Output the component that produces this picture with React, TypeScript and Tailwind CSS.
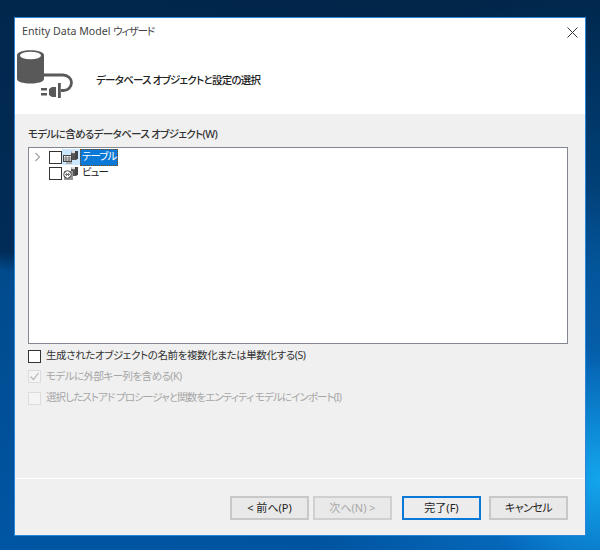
const font = "font-['Noto_Sans','Noto_Sans_CJK_JP',sans-serif] [font-feature-settings:'palt']";

function TreeIcon({ kind }: { kind: "table" | "view" }) {
  return (
    <svg width="17" height="15" viewBox="0 0 17 15" className="shrink-0">
      <rect x="9" y="1" width="6" height="9" rx="1" fill="#555" />
      <ellipse cx="12" cy="2" rx="3" ry="1.2" fill="#ddd" />
      <rect x="13" y="1" width="3" height="8" fill="#444" />
      {kind === "table" ? (
        <g>
          <rect x="1.500" y="5.500" width="8" height="6" fill="#fff" stroke="#444" />
          <path d="M1.500 8h8M1.500 10h8M4 5.500v6M7 5.500v6" stroke="#555" strokeWidth="0.8" />
          <rect x="4" y="12" width="6" height="2" fill="#aaa" />
        </g>
      ) : (
        <g>
          <rect x="2" y="5" width="9" height="9" fill="#999" />
          <circle cx="5.500" cy="8.500" r="3.800" fill="#fff" stroke="#444" />
          <path d="M3.500 6.500l4 4M7.500 6.500l-4 4M3 8.500h5" stroke="#555" strokeWidth="0.8" />
        </g>
      )}
    </svg>
  );
}

function Check({ checked, disabled }: { checked?: boolean; disabled?: boolean }) {
  return (
    <span
      className={`flex h-[13px] w-[13px] shrink-0 items-center justify-center border ${
        disabled ? "border-[#dcdcdc] bg-[#f4f4f4]" : "border-[#333] bg-white"
      }`}
    >
      {checked && (
        <svg width="11" height="11" viewBox="0 0 11 11">
          <path d="M1.500 5.500l3 3 5-6.500" fill="none" stroke="#b5b5b5" strokeWidth="1.200" />
        </svg>
      )}
    </span>
  );
}

function Btn({ children, disabled, primary, tight }: { children: string; disabled?: boolean; primary?: boolean; tight?: boolean }) {
  return (
    <div
      className={`flex h-[24px] w-[79px] items-center justify-center text-[11px] ${tight ? "tracking-[-0.5px]" : ""} ${
        primary
          ? "border-2 border-[#0a78d7] bg-[#ececec] text-[#222]"
          : disabled
            ? "border-2 border-[#d0d0d0] bg-[#e9e9e9] text-[#a8a8a8]"
            : "border-2 border-[#c8c8c8] bg-[#e9e9e9] text-[#222]"
      }`}
    >
      {children}
    </div>
  );
}

export default function App() {
  return (
    <div className={`h-[550px] w-[600px] overflow-hidden bg-[radial-gradient(circle_at_100%_87%,rgba(20,170,240,0.95)_0%,rgba(10,120,210,0.55)_15%,transparent_38%),radial-gradient(circle_at_100%_50%,rgba(1,85,155,0.75)_0%,transparent_45%),linear-gradient(189.5deg,#012548_0%,#012c58_54%,#014a8c_57%,#0056a4_100%)] pl-[14px] pt-[17px] ${font}`}>
      <div className="flex h-[519px] w-[572px] flex-col border border-[#2b86d8] bg-[#f0f0f0]">
        <div className="h-[96px] shrink-0 bg-white">
          <div className="flex h-[28px] items-center justify-between pl-[7px] pr-[7px]">
            <span className="text-[10.6px] text-[#444]">
              Entity Data Model <span className="tracking-[-1.2px]">ウィザード</span>
            </span>
            <svg width="11" height="11" viewBox="0 0 11 11">
              <path d="M0.500 0.500l10 10M10.500 0.500l-10 10" stroke="#333" strokeWidth="1" />
            </svg>
          </div>
          <div className="flex items-start">
            <svg width="58" height="52" viewBox="0 0 58 52" className="ml-[2px] mt-[4px] shrink-0">
              <path d="M0 5c0-6.500 27-6.500 27 0v24c0 6-27 6-27 0z" fill="#595959" />
              <ellipse cx="13.500" cy="5.500" rx="10.500" ry="3.800" fill="#fff" />
              <path d="M27 25H46a8.500 7.500 0 0 1 8.500 7.500a8 8 0 0 1-8 8h-2.500" fill="none" stroke="#595959" strokeWidth="2.800" />
              <path d="M32 39l3-2h4v10h-4l-3-2z" fill="#595959" />
              <rect x="41" y="33" width="2.800" height="15" fill="#595959" />
              <path d="M24 38h6v2.500h-6zM24 43h6v2.500h-6z" fill="#595959" />
            </svg>
            <span className="ml-[21px] mt-[27px] text-[10.5px] font-medium tracking-[-0.76px] text-[#222]">データベース オブジェクトと設定の選択</span>
          </div>
        </div>

        <div className="flex min-h-0 flex-1 flex-col px-[13px]">
          <div className="mt-[11px] text-[10.5px] font-medium leading-[18px] tracking-[-0.64px] text-[#333]">モデルに含めるデータベース オブジェクト(W)</div>
          <div className="mt-[4px] h-[197px] w-[540px] border border-[#828790] bg-white pl-[5px] pt-[1px]">
            <div className="flex h-[16px] items-center">
              <svg width="8" height="10" viewBox="0 0 8 10" className="shrink-0">
                <path d="M1.500 1l4 4-4 4" fill="none" stroke="#a6a6a6" strokeWidth="1.300" />
              </svg>
              <span className="ml-[7px]"><Check /></span>
              <span className="flex h-[16px] items-center bg-[#cce8ff] pr-[1px]">
                <TreeIcon kind="table" />
              </span>
              <span className="flex h-[17px] items-center border border-dotted border-[#7a4a10] bg-[#0a78d7] px-[1px] text-[10.5px] tracking-[-1px] text-white">テーブル</span>
            </div>
            <div className="flex h-[16px] items-center pl-[15px]">
              <Check />
              <TreeIcon kind="view" />
              <span className="ml-[3px] text-[10.5px] tracking-[-1px] text-[#222]">ビュー</span>
            </div>
          </div>

          <div className="mt-[2px] flex flex-col">
            <div className="flex h-[20px] items-center gap-[5px] text-[10.5px] tracking-[-0.4px] text-[#333]">
              <Check />
              <span>生成されたオブジェクトの名前を複数化または単数化する(S)</span>
            </div>
            <div className="flex h-[21px] items-center gap-[5px] text-[10.5px] tracking-[-0.55px] text-[#a6a6a6]">
              <Check checked disabled />
              <span>モデルに外部キー列を含める(K)</span>
            </div>
            <div className="flex h-[22px] items-center gap-[5px] text-[10.5px] tracking-[-0.9px] text-[#a6a6a6]">
              <Check disabled />
              <span>選択したストアド プロシージャと関数をエンティティ モデルにインポート(I)</span>
            </div>
          </div>
        </div>

        <div className="h-[1px] shrink-0 bg-white" />
        <div className="flex h-[56px] shrink-0 items-start justify-end pr-[17px] pt-[17px]">
          <Btn>{"< 前へ(P)"}</Btn>
          <div className="ml-[4px]"><Btn disabled>{"次へ(N) >"}</Btn></div>
          <div className="ml-[10px]"><Btn primary>完了(F)</Btn></div>
          <div className="ml-[8px]"><Btn tight>キャンセル</Btn></div>
        </div>
      </div>
    </div>
  );
}
